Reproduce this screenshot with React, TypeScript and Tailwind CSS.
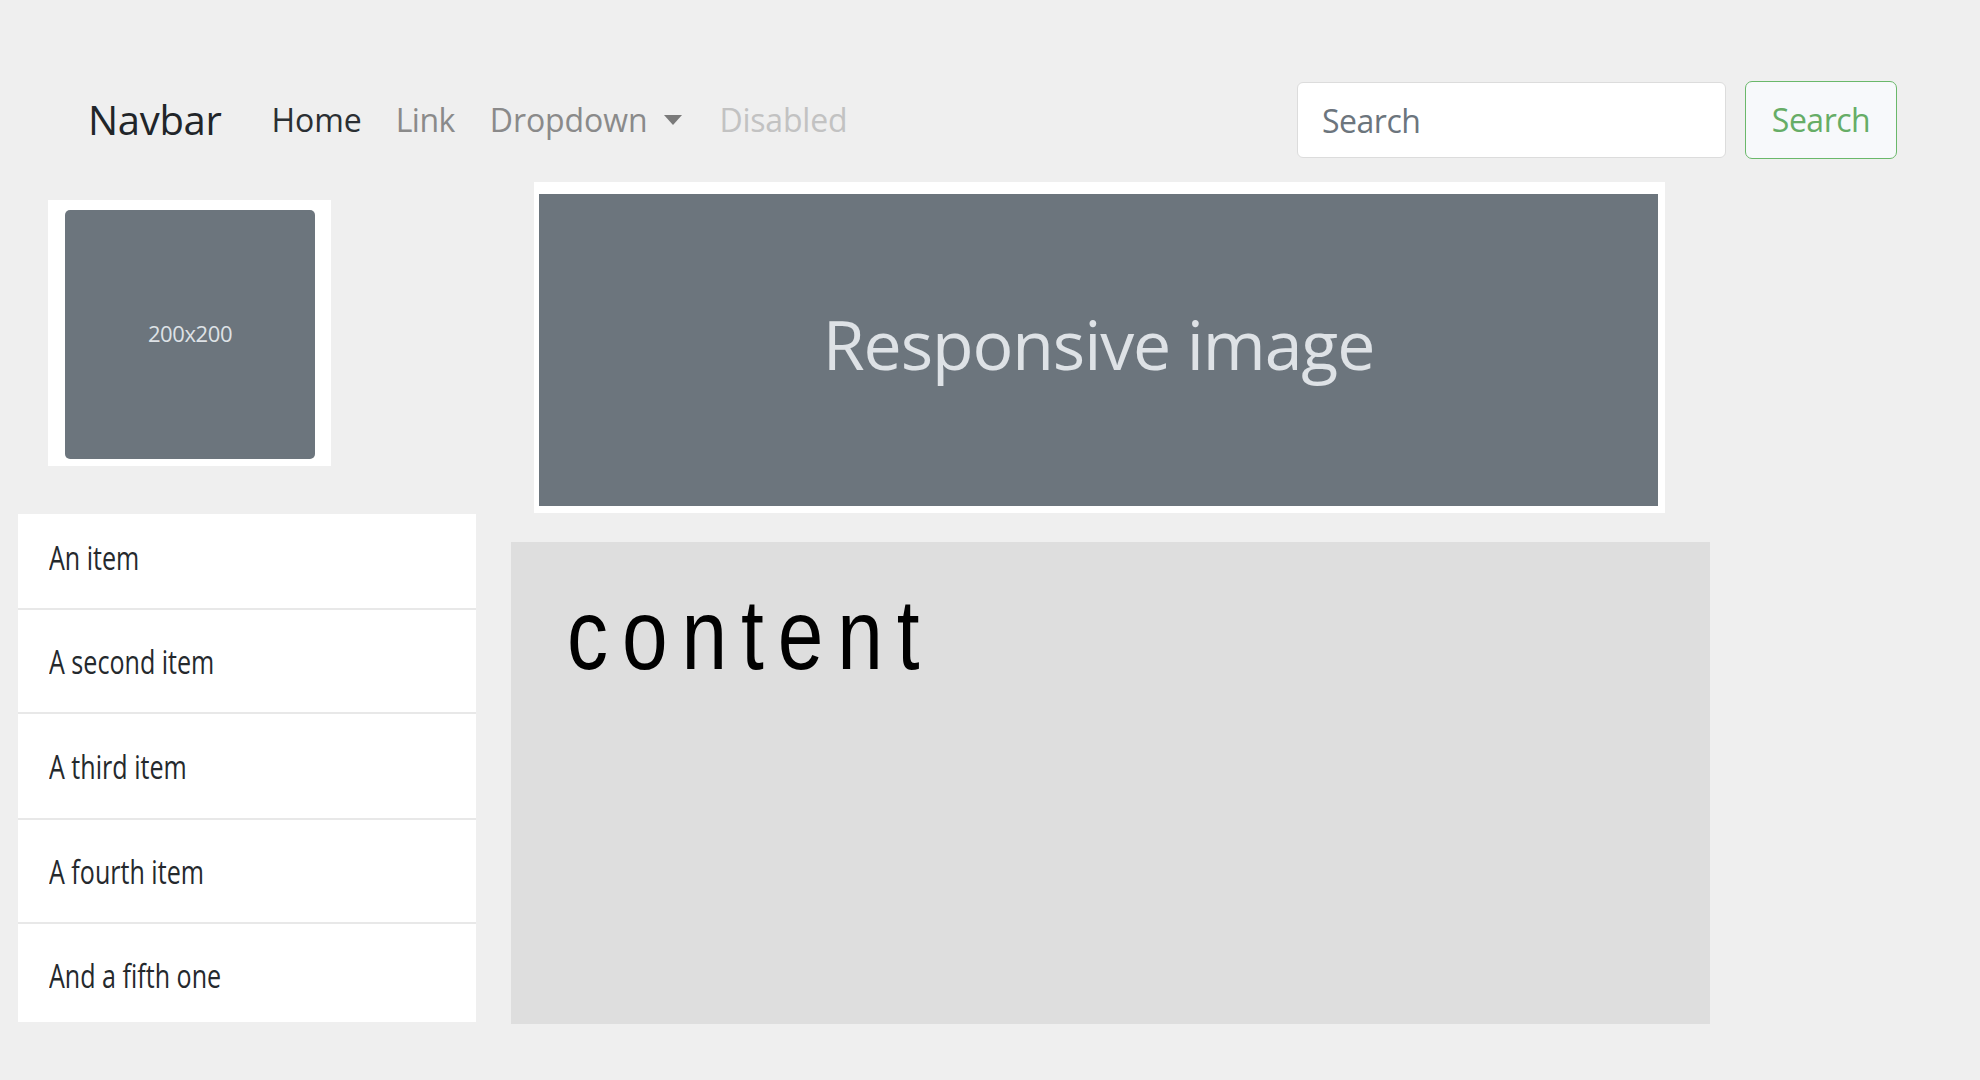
const items = [
  { label: "An item", h: "h-[94px] pb-[8px]" },
  { label: "A second item", h: "h-[102px]" },
  { label: "A third item", h: "h-[104px]" },
  { label: "A fourth item", h: "h-[102px]" },
  { label: "And a fifth one", h: "h-[98px] pt-[5px]" },
];

function Navbar() {
  return (
    <nav className="flex items-center justify-between pt-[81px] pl-[88px] pr-[83px]">
      <div className="flex items-center">
        <a className="text-[40px] leading-none tracking-[-0.3px] text-[#212529]">Navbar</a>
        <a className="ml-[50px] text-[32px] leading-none tracking-[-0.1px] text-[#2b2f33]">Home</a>
        <a className="ml-[34px] text-[32px] leading-none tracking-[-0.5px] text-[#8a8a8a]">Link</a>
        <a className="ml-[35px] flex items-center text-[32px] leading-none tracking-[-0.1px] text-[#8a8a8a]">
          Dropdown
          <span className="ml-[17px] h-0 w-0 border-x-[9px] border-t-[10px] border-x-transparent border-t-[#7a7a7a]" />
        </a>
        <a className="ml-[37px] text-[32px] leading-none tracking-[-0.2px] text-[#c2c2c2]">Disabled</a>
      </div>
      <form className="flex items-center gap-[19px]" onSubmit={(e) => e.preventDefault()}>
        <input
          type="search"
          placeholder="Search"
          className="h-[76px] w-[429px] rounded-[6px] border border-[#dcdcdc] bg-white pl-[24px] text-[32px] tracking-[-0.5px] text-[#495057] outline-none placeholder:text-[#6c757d]"
        />
        <button
          type="submit"
          className="h-[78px] w-[152px] rounded-[7px] border-[1.5px] border-[#6ab86a] bg-[#f7f9fb] text-[32px] tracking-[-0.5px] text-[#66ad66]"
        >
          Search
        </button>
      </form>
    </nav>
  );
}

function Sidebar() {
  return (
    <div className="ml-[18px] flex w-[458px] flex-col">
      <div className="ml-[30px] mt-[18px] w-[283px] bg-white pb-[7px] pl-[17px] pr-[16px] pt-[10px]">
        <div className="flex h-[249px] w-[250px] items-center justify-center rounded-[5px] bg-[#6c757d] pb-[2px] text-[22px] tracking-[-0.4px] text-[#dee2e6]">
          200x200
        </div>
      </div>
      <ul className="mt-[48px] flex flex-col gap-[2px] bg-[#e8e8e8]">
        {items.map((it) => (
          <li key={it.label} className={`flex items-center bg-white pl-[31px] ${it.h}`}>
            <span className="inline-block origin-left scale-x-[0.76] whitespace-nowrap text-[33px] leading-none text-[#25292d]">
              {it.label}
            </span>
          </li>
        ))}
      </ul>
    </div>
  );
}

export default function App() {
  return (
    <div className="min-h-screen w-full overflow-hidden bg-[#efefef] font-['Open_Sans',sans-serif]">
      <Navbar />
      <div className="mt-[23px] flex">
        <Sidebar />
        <main className="ml-[35px] flex flex-col">
          <figure className="ml-[23px] w-[1131px] bg-white pb-[7px] pl-[5px] pr-[7px] pt-[12px]">
            <div className="flex h-[312px] w-[1119px] items-center justify-center bg-[#6c757d] pb-[12px] text-[68px] tracking-[-1.1px] text-[#dee2e6]">
              Responsive image
            </div>
          </figure>
          <section className="mt-[29px] h-[482px] w-[1199px] bg-[#dedede] pl-[56px] pt-[42px]">
            <div className="origin-left scale-x-[0.82] whitespace-nowrap font-['Liberation_Sans',Arial,sans-serif] text-[100px] leading-none tracking-[17px] text-black">
              content
            </div>
          </section>
        </main>
      </div>
    </div>
  );
}
